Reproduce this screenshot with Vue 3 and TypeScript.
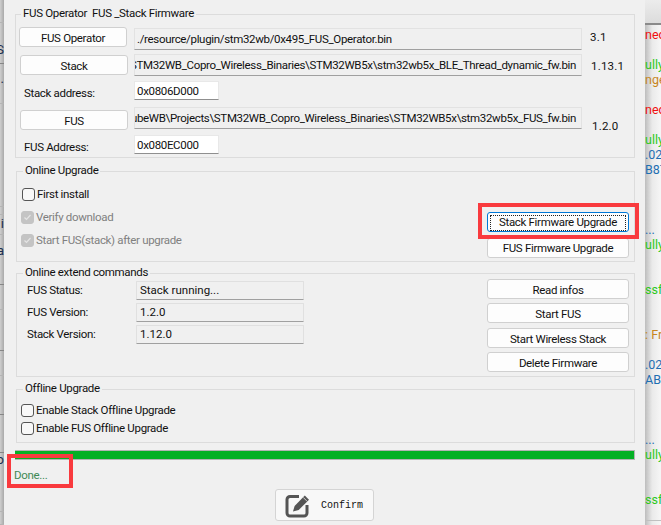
<template>
  <div class="screen">
    <!-- window behind the dialog, left edge -->
    <div class="back-left">
      <div
        v-for="(seg, i) in leftSegments"
        :key="i"
        class="seg"
        :class="{ dark: seg.dark }"
        :style="{ height: seg.h + 'px', paddingTop: (seg.pad || 0) + 'px' }"
      >{{ seg.text }}</div>
    </div>

    <div class="dialog">
      <fieldset class="group group-fw">
        <legend>FUS Operator&nbsp;&nbsp;FUS _Stack Firmware</legend>
        <div class="row r1">
          <button class="btn file-btn first">FUS Operator</button>
          <div class="path">./resource/plugin/stm32wb/0x495_FUS_Operator.bin</div>
          <span class="ver">3.1</span>
        </div>
        <div class="row r2">
          <button class="btn file-btn">Stack</button>
          <div class="path end"><span>\STM32WB_Copro_Wireless_Binaries\STM32WB5x\stm32wb5x_BLE_Thread_dynamic_fw.bin</span></div>
          <span class="ver v2">1.13.1</span>
        </div>
        <div class="row r3">
          <label class="addr-label">Stack address:</label>
          <div class="addr">0x0806D000</div>
        </div>
        <div class="row r4">
          <button class="btn file-btn">FUS</button>
          <div class="path end"><span>CubeWB\Projects\STM32WB_Copro_Wireless_Binaries\STM32WB5x\stm32wb5x_FUS_fw.bin</span></div>
          <span class="ver v3">1.2.0</span>
        </div>
        <div class="row r5">
          <label class="addr-label">FUS Address:</label>
          <div class="addr">0x080EC000</div>
        </div>
      </fieldset>

      <fieldset class="group group-online">
        <legend>Online Upgrade</legend>
        <div class="online-body">
          <div class="checks">
            <div class="check first-install"><span class="box"></span>First install</div>
            <div class="check disabled verify">
              <span class="box on">
                <svg width="13" height="13" viewBox="0 0 13 13"><path d="M3.5 6.5l2 2 4-4.5" fill="none" stroke="#e4e4e4" stroke-width="1.2" /></svg>
              </span>Verify download
            </div>
            <div class="check disabled start">
              <span class="box on">
                <svg width="13" height="13" viewBox="0 0 13 13"><path d="M3.5 6.5l2 2 4-4.5" fill="none" stroke="#e4e4e4" stroke-width="1.2" /></svg>
              </span>Start FUS(stack) after upgrade
            </div>
          </div>
          <div class="side upgrade-side">
            <button class="btn side-btn focused"><span>Stack Firmware Upgrade</span></button>
            <button class="btn side-btn">FUS Firmware Upgrade</button>
          </div>
        </div>
      </fieldset>

      <fieldset class="group group-ext">
        <legend>Online extend commands</legend>
        <div class="ext-body">
          <div class="infos">
            <div v-for="info in infos" :key="info.label" class="info">
              <span class="info-label">{{ info.label }}</span>
              <span class="info-value">{{ info.value }}</span>
            </div>
          </div>
          <div class="side ext-side">
            <button v-for="cmd in commands" :key="cmd" class="btn side-btn">{{ cmd }}</button>
          </div>
        </div>
      </fieldset>

      <fieldset class="group group-off">
        <legend>Offline Upgrade</legend>
        <div class="check off-1"><span class="box"></span>Enable Stack Offline Upgrade</div>
        <div class="check off-2"><span class="box"></span>Enable FUS Offline Upgrade</div>
      </fieldset>

      <div class="progress"><div class="bar"></div></div>
      <div class="status">Done...</div>

      <div class="footer">
        <button class="confirm">
          <svg width="26" height="27" viewBox="0 0 26 27">
            <path d="M14 4.5H5a3 3 0 0 0-3 3V21a3 3 0 0 0 3 3h14a3 3 0 0 0 3-3V13" fill="none" stroke="#555" stroke-width="3" />
            <path d="M8 19.5l1.6-5.6L19.8 3.6l4.2 4.2L13.7 18z" fill="#555" />
            <path d="M18.2 5.4l4 4" stroke="#f0f0f0" stroke-width="0.8" />
          </svg>
          <span>Confirm</span>
        </button>
      </div>

      <div class="mark mark-upgrade"></div>
      <div class="mark mark-done"></div>
    </div>

    <!-- log window behind the dialog, right edge -->
    <div class="back-right">
      <div class="back-head"></div>
      <div class="log">
        <div
          v-for="(line, i) in logLines"
          :key="i"
          class="log-line"
          :style="{ color: line[1] }"
        >{{ line[0] }}</div>
      </div>
    </div>
  </div>
</template>

<script setup lang="ts">
type Segment = { h: number; dark?: boolean; text?: string; pad?: number }

const leftSegments: Segment[] = [
  { h: 23 },
  { h: 41, dark: true, text: 'S', pad: 20 },
  { h: 40, text: '.', pad: 8 },
  { h: 103 },
  { h: 8 },
  { h: 20, text: 'i', pad: 2 },
  { h: 50, dark: true, text: 'a', pad: 9 },
  { h: 25 },
  { h: 41, dark: true },
  { h: 25 },
  { h: 39, dark: true },
  { h: 38, dark: true },
  { h: 59, text: 'o', pad: 0 },
  { h: 13 }
]

const infos = [
  { label: 'FUS Status:', value: 'Stack running...' },
  { label: 'FUS Version:', value: '1.2.0' },
  { label: 'Stack Version:', value: '1.12.0' }
]

const commands = ['Read infos', 'Start FUS', 'Start Wireless Stack', 'Delete Firmware']

const RED = '#f01010'
const GREEN = '#2bc81b'
const ORANGE = '#c8861e'
const BLUE = '#1f6fb2'

const logLines: [string, string][] = [
  ['nec', RED], ['', ''], ['ully', GREEN], ['nge', ORANGE], ['', ''],
  ['nec', RED], ['', ''], ['ully', GREEN], ['.02', BLUE], ['B87', BLUE],
  ['', ''], ['', ''], ['', ''], ['...', BLUE], ['ully', GREEN],
  ['', ''], ['', ''], ['ssfu', GREEN], ['', ''], ['', ''],
  [': Fr', ORANGE], ['', ''], ['.02', BLUE], ['AB', BLUE], ['', ''],
  ['', ''], ['', ''], ['...', BLUE], ['ully', GREEN], ['', ''],
  ['', ''], ['ssfu', GREEN]
]
</script>

<style>
html,
body {
  margin: 0;
  background: #f0f0f0;
}
</style>

<style scoped>
.screen {
  display: flex;
  width: 661px;
  height: 525px;
  overflow: hidden;
  font-family: Roboto, "Liberation Sans", sans-serif;
  font-size: 11.5px;
  letter-spacing: -0.33px;
  color: #111;
}

.back-left {
  width: 4px;
  flex: none;
  background: linear-gradient(to right, #cfcfcf, #a9a9a9);
  overflow: hidden;
}

.seg {
  display: flex;
  justify-content: flex-end;
  align-items: flex-start;
  box-sizing: border-box;
  border-bottom: 1px solid #b4b4b4;
  line-height: 14px;
  font-size: 13px;
  letter-spacing: 0;
  color: #1c3050;
  white-space: nowrap;
}

.seg.dark {
  border-bottom-color: #868686;
}

.dialog {
  position: relative;
  width: 641px;
  flex: none;
  box-sizing: border-box;
  padding: 6px 10px 0 11px;
  background: #f0f0f0;
}

.group {
  margin: 0;
  padding: 0;
  border: 1px solid #dcdcdc;
  box-sizing: border-box;
  min-width: 0;
}

.group legend {
  padding: 0 2px;
  margin-left: 6px;
  height: 16px;
  line-height: 15px;
}

.group-fw {
  height: 152px;
  padding-left: 3px;
}

.group-fw legend {
  margin-left: 2px;
}

.row {
  display: flex;
  align-items: flex-start;
}

.r1 { height: 27px; margin-top: 5px; }
.r2 { height: 27px; }
.r3 { height: 26px; }
.r4 { height: 28px; }
.r5 { height: 19px; }

.btn {
  box-sizing: border-box;
  height: 20px;
  padding: 1px 0 0;
  border: 1px solid #d0d0d0;
  border-radius: 3px;
  background: #fdfdfd;
  font: inherit;
  letter-spacing: inherit;
  color: inherit;
  line-height: 17px;
}

.file-btn {
  width: 108px;
  margin-left: 1px;
  margin-top: 1px;
  padding-top: 2px;
  flex: none;
}

.r4 .file-btn {
  margin-top: 3px;
}

.file-btn.first {
  margin-left: 0;
  margin-top: 0;
  margin-right: 1px;
}

.path {
  box-sizing: border-box;
  width: 448px;
  height: 22px;
  margin-left: 6px;
  padding: 0 5px 0 2px;
  border: 1px solid #e2e2e2;
  border-bottom: 1px solid #a0a0a0;
  line-height: 20px;
  white-space: nowrap;
  overflow: hidden;
  flex: none;
}

.r1 .path {
  margin-top: 1px;
}

.path.end {
  display: flex;
  justify-content: flex-end;
}

.path.end span {
  flex: none;
}

.ver {
  margin-left: 8px;
  margin-top: 2px;
  line-height: 16px;
  letter-spacing: 0.2px;
}

.ver.v2 {
  margin-left: 9px;
  margin-top: 4px;
}

.ver.v3 {
  margin-left: 10px;
  margin-top: 11px;
}

.addr-label {
  width: 115px;
  padding-left: 5px;
  line-height: 24px;
  box-sizing: border-box;
  flex: none;
}

.addr {
  box-sizing: border-box;
  width: 85px;
  height: 19px;
  padding-left: 2px;
  border: 1px solid #e8e8e8;
  border-bottom: 1px solid #8f8f8f;
  background: #fff;
  line-height: 18px;
}

.group-online {
  height: 99px;
  margin-top: 5px;
  margin-left: 1px;
}

.online-body,
.ext-body {
  display: flex;
  justify-content: space-between;
}

.checks {
  padding-left: 5px;
}

.check {
  display: flex;
  align-items: center;
  height: 14px;
}

.box {
  box-sizing: border-box;
  width: 13px;
  height: 13px;
  margin-right: 2px;
  border: 1px solid #555;
  border-radius: 3px;
  background: #f8f8f8;
  flex: none;
}

.box.on {
  border-color: #c4c4c4;
  background: #c4c4c4;
}

.box svg {
  display: block;
  margin: -1px;
}

.check.disabled {
  color: #808080;
}

.first-install { margin-top: 8px; }
.verify { margin-top: 9px; margin-left: -1px; }
.start { margin-top: 9px; margin-left: -1px; }

.side {
  display: flex;
  flex-direction: column;
  width: 142px;
  margin-right: 5px;
}

.side-btn {
  width: 100%;
  height: 20px;
  flex: none;
}

.upgrade-side {
  padding-top: 33px;
}

.upgrade-side .side-btn + .side-btn {
  margin-top: 6px;
}

.focused {
  padding: 2px;
  border-color: #0078d7;
}

.focused span {
  display: block;
  height: 14px;
  line-height: 12px;
  border: 1px dotted #222;
}

.group-ext {
  height: 112px;
  margin-top: 3px;
  margin-left: 1px;
}

.ext-body {
  margin-top: -2px;
}

.infos {
  padding-top: 2px;
  padding-left: 10px;
}

.info {
  display: flex;
  align-items: center;
  height: 19px;
  margin-bottom: 3px;
}

.info-label {
  width: 109px;
  margin-top: -2px;
  flex: none;
}

.info-value {
  box-sizing: border-box;
  width: 168px;
  height: 19px;
  padding-left: 3px;
  border: 1px solid #e0e0e0;
  border-bottom: 1px solid #a0a0a0;
  border-radius: 1px;
  line-height: 16px;
  letter-spacing: 0;
}

.ext-side {
  gap: 4.4px;
}

.ext-side .btn {
  padding-top: 2px;
}

.group-off {
  height: 62px;
  margin-top: 4px;
  margin-left: 1px;
}

.group-off .check {
  margin-left: 4px;
}

.off-1 { margin-top: 6px; }
.off-2 { margin-top: 4px; }

.progress {
  box-sizing: border-box;
  height: 10px;
  margin-top: 7px;
  border: 1px solid #b4b4b4;
  border-width: 1px 1px 1px 0;
}

.bar {
  height: 100%;
  background: #05b025;
}

.status {
  margin-top: 7px;
  margin-left: -1px;
  height: 16px;
  line-height: 16px;
  color: #3f8a55;
}

.footer {
  display: flex;
  justify-content: center;
  margin-top: 6px;
  padding-right: 1px;
}

.confirm {
  display: flex;
  align-items: center;
  box-sizing: border-box;
  width: 99px;
  height: 32px;
  padding: 0 0 0 9px;
  border: 1px solid #d4d4d4;
  border-radius: 3px;
  background: #f8f8f8;
  font-family: "Liberation Mono", "DejaVu Sans Mono", monospace;
  font-size: 10px;
  letter-spacing: 0;
  color: #111;
}

.confirm span {
  margin-left: 10px;
}

.mark {
  position: absolute;
  box-sizing: border-box;
  border: 4px solid #f93a3e;
}

.mark-upgrade {
  left: 474px;
  top: 203px;
  width: 161px;
  height: 36px;
}

.mark-done {
  left: 3px;
  top: 454px;
  width: 66px;
  height: 34px;
}

.back-right {
  flex: 1;
  min-width: 0;
  overflow: hidden;
  background: linear-gradient(to right, #bdbdbd, #eaeaea 45%, #f6f6f6);
}

.back-head {
  box-sizing: border-box;
  height: 25px;
  border-bottom: 2px solid #8a8a8a;
  background: linear-gradient(to bottom, #ececec, #dcdcdc);
}

.log {
  height: 493px;
  padding-top: 2px;
  border-bottom: 1px solid #c0c0c0;
}

.log-line {
  height: 15px;
  line-height: 15px;
  font-size: 12.5px;
  letter-spacing: 0;
  white-space: nowrap;
}
</style>
